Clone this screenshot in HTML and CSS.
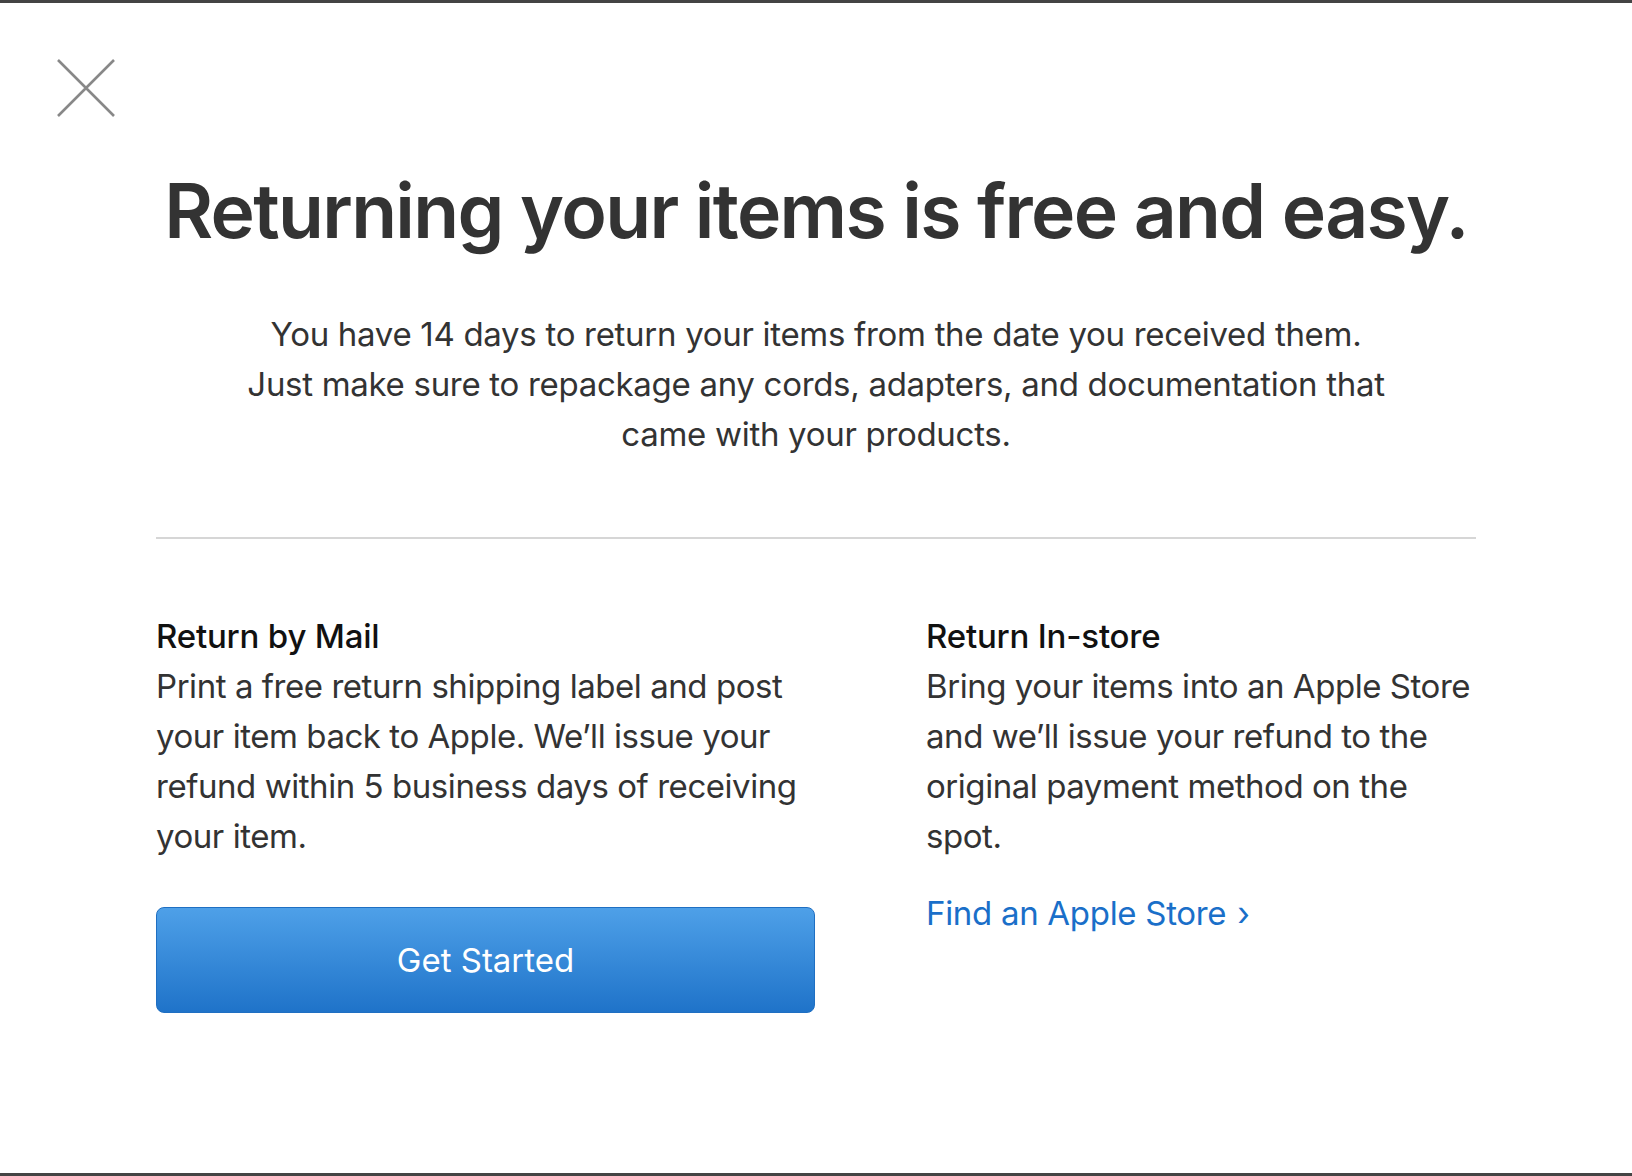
FILE: index.html
```html
<!DOCTYPE html>
<html lang="en">
<head>
<meta charset="utf-8">
<title>Returns</title>
<link rel="stylesheet" href="styles.css">
</head>
<body>
<div class="page">
  <div class="topbar">
    <button class="close" aria-label="Close">
      <svg width="58" height="58" viewBox="0 0 58 58" aria-hidden="true">
        <path d="M1 1 L57 57 M57 1 L1 57" stroke="#888" stroke-width="2.6" fill="none"/>
      </svg>
    </button>
  </div>
  <main class="content">
    <h1 class="title">Returning your items is free and easy.</h1>
    <p class="intro">You have 14 days to return your items from the date you received them.<br>Just make sure to repackage any cords, adapters, and documentation that<br>came with your products.</p>
    <hr class="divider">
    <div class="options">
      <section class="option option-mail">
        <h2 class="option-title">Return by Mail</h2>
        <p class="option-text">Print a free return shipping label and post your item back to Apple. We’ll issue your refund within 5 business days of receiving your item.</p>
        <button class="btn-primary">Get Started</button>
      </section>
      <section class="option option-store">
        <h2 class="option-title">Return In-store</h2>
        <p class="option-text">Bring your items into an Apple Store and we’ll issue your refund to the original payment method on the spot.</p>
        <a class="link" href="#">Find an Apple Store <span class="chev">›</span></a>
      </section>
    </div>
  </main>
</div>
</body>
</html>
```
FILE: styles.css
```css
* { box-sizing: border-box; }
html, body { margin: 0; padding: 0; background: #fff; }
body {
  font-family: Inter, "Noto Sans", "Liberation Sans", sans-serif;
  color: #333;
}
.page {
  height: 1176px;
  border-top: 3px solid #444;
  border-bottom: 3px solid #444;
  overflow: hidden;
}
.topbar {
  padding: 56px 0 0 57px;
  height: 120px;
}
.close {
  display: block;
  width: 58px;
  height: 58px;
  padding: 0;
  border: 0;
  background: none;
  cursor: pointer;
}
.close svg { display: block; }
.content {
  width: 1320px;
  margin: 0 auto;
}
.title {
  margin: 38px 0 0;
  font-size: 75px;
  line-height: 100px;
  font-weight: 600;
  letter-spacing: -1.65px;
  text-align: center;
  white-space: nowrap;
  color: #333;
}
.intro {
  margin: 48px 0 0;
  font-size: 33px;
  line-height: 50px;
  text-align: center;
  color: #333;
  letter-spacing: -0.3px;
}
.divider {
  margin: 78px 0 0;
  border: 0;
  border-top: 2px solid #d6d6d6;
  height: 0;
}
.options {
  display: grid;
  grid-template-columns: 660px 552px;
  column-gap: 110px;
  margin-top: 72px;
}
.option-title {
  margin: 0;
  font-size: 33px;
  line-height: 50px;
  font-weight: 500;
  color: #111;
  letter-spacing: -0.2px;
}
.option-text {
  margin: 0;
  font-size: 33px;
  line-height: 50px;
  color: #333;
  letter-spacing: -0.45px;
}
.btn-primary {
  display: block;
  width: 659px;
  height: 106px;
  margin-top: 46px;
  border: 1px solid #1f6fc2;
  border-radius: 8px;
  background: linear-gradient(#4ea0e8, #1f73c9);
  color: #fff;
  font-family: inherit;
  font-size: 33px;
  letter-spacing: 0;
  cursor: pointer;
}
.link {
  display: inline-block;
  margin-top: 27px;
  font-size: 33px;
  line-height: 50px;
  color: #1a6fc9;
  text-decoration: none;
  letter-spacing: -0.3px;
}
.chev { margin-left: 2px; }
```
